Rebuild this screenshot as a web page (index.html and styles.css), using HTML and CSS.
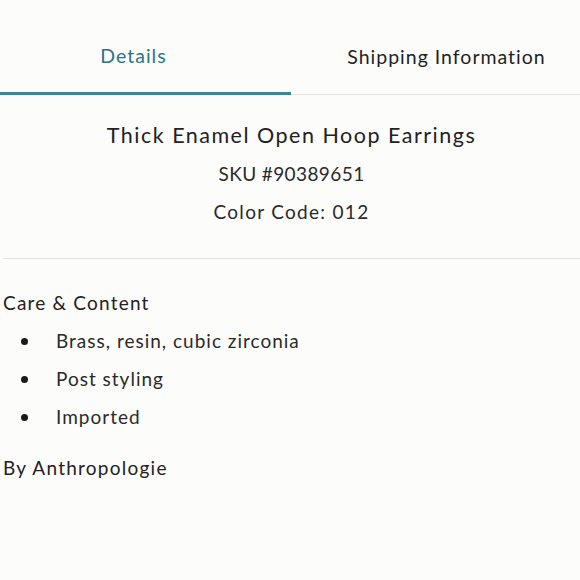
FILE: index.html
```html
<!DOCTYPE html>
<html lang="en">
<head>
<meta charset="utf-8">
<title>Details</title>
<link rel="stylesheet" href="styles.css">
</head>
<body>
<div class="page">
  <nav class="tabs">
    <div class="tab tab-left active">Details</div>
    <div class="tab tab-right">Shipping Information</div>
  </nav>
  <section class="summary">
    <h1 class="title">Thick Enamel Open Hoop Earrings</h1>
    <p class="meta sku">SKU #90389651</p>
    <p class="meta color">Color Code: 012</p>
  </section>
  <section class="care">
    <h2 class="care-title">Care &amp; Content</h2>
    <ul class="care-list">
      <li>Brass, resin, cubic zirconia</li>
      <li>Post styling</li>
      <li>Imported</li>
    </ul>
    <p class="brand">By Anthropologie</p>
  </section>
</div>
</body>
</html>
```
FILE: styles.css
```css
* { box-sizing: border-box; }
html, body { margin: 0; padding: 0; background: #fcfcfa; }
body {
  font-family: Lato, "Open Sans", sans-serif;
  color: #222;
  width: 580px;
  height: 580px;
  overflow: hidden;
}
.page { display: flex; flex-direction: column; }
.tabs {
  display: flex;
  height: 95px;
  border-bottom: 1px solid #e2e2e0;
}
.tab {
  flex: 1;
  display: flex;
  align-items: center;
  justify-content: center;
  padding-top: 18px;
  font-size: 19.5px;
  letter-spacing: 1px;
  color: #1f1f1f;
}
.tab-left { padding-right: 24px; }
.tab-right { padding-left: 22px; }
.tab.active {
  color: #2a7488;
  border-bottom: 3px solid #3e8598;
  margin-bottom: -1px;
}
.summary {
  display: flex;
  flex-direction: column;
  align-items: center;
  margin-left: 3px;
  padding-top: 25px;
  padding-bottom: 31px;
  border-bottom: 1px solid #e4e4e2;
}
.title {
  margin: 0;
  font-weight: 400;
  font-size: 21.5px;
  letter-spacing: 1.5px;
  line-height: 30px;
  color: #222;
}
.meta {
  margin: 8px 0 0;
  font-size: 19px;
  line-height: 30px;
  color: #2a2a2a;
}
.sku { margin-top: 9px; letter-spacing: 0.4px; }
.color { letter-spacing: 1.3px; }
.care { padding: 29px 3px 0; }
.care-title {
  margin: 0;
  font-weight: 400;
  font-size: 19px;
  letter-spacing: 1.2px;
  line-height: 30px;
}
.care-list {
  list-style: none;
  margin: 8px 0 0;
  padding: 0;
  display: flex;
  flex-direction: column;
  gap: 8px;
}
.care-list li {
  position: relative;
  padding-left: 53px;
  font-size: 19px;
  letter-spacing: 1px;
  line-height: 30px;
  color: #2a2a2a;
}
.care-list li::before {
  content: "";
  position: absolute;
  left: 18px;
  top: 12px;
  width: 7px;
  height: 7px;
  border-radius: 50%;
  background: #1a1a1a;
}
.brand {
  margin: 21px 0 0;
  font-size: 19px;
  letter-spacing: 1.25px;
  line-height: 30px;
}
```
